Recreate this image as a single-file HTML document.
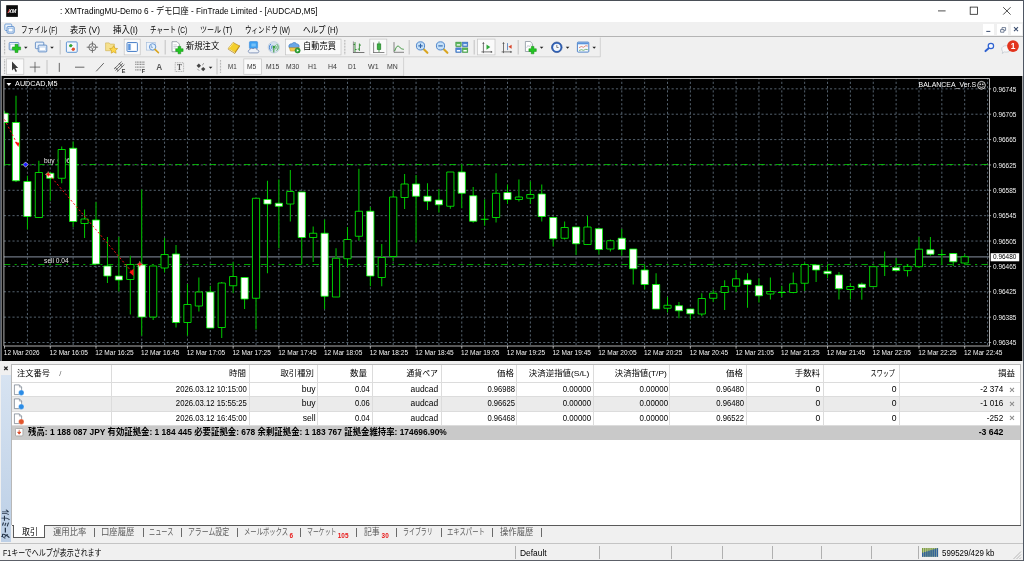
<!DOCTYPE html>
<html lang="ja"><head><meta charset="utf-8"><title>XMTradingMU-Demo 6 - AUDCAD,M5</title>
<style>
html,body{margin:0;padding:0;background:#f0f0f0;}
body{width:1024px;height:561px;overflow:hidden;font-family:"Liberation Sans","Noto Sans CJK JP",sans-serif;}
#win{will-change:transform;position:relative;width:1024px;height:561px;overflow:hidden;background:#f0f0f0;}
#win div,#win span.t,#win svg{position:absolute;}
span.t{white-space:nowrap;display:block;}
#titlebar{left:0;top:0;width:1024px;height:22px;background:#fff;}
#menubar{left:0;top:22px;width:1024px;height:14.5px;background:#f0f0f0;}
.hl{background:#a0a0a0;height:0.7px;}
.vl{background:#a0a0a0;width:0.7px;}

</style></head>
<body>
<div id="win">
<div id="titlebar">
<svg style="left:6px;top:4.500px" width="12.200" height="12.200" viewBox="0 0 12.200 12.200"><rect x="0.200" y="0.200" width="11.700" height="11.700" fill="#0c0c0c"/><text x="6.300" y="8.100" font-size="5.200" font-weight="bold" font-style="italic" text-anchor="middle" fill="#fff" font-family="Liberation Sans,sans-serif" textLength="8.200" lengthAdjust="spacingAndGlyphs">XM</text><path d="M1.800 7.900l1.900-3.600" stroke="#e02a2a" stroke-width="0.900"/></svg>
<span id="t0" class="t" style="top:4.85px;font-size:8.6px;line-height:12.90px;color:#000;left:60.40px;transform-origin:0 50%;transform:scaleX(0.9550);">: XMTradingMU-Demo 6 - デモ口座 - FinTrade Limited - [AUDCAD,M5]</span>
<svg style="left:930px;top:0" width="94" height="22" viewBox="930 0 94 22" fill="none" stroke="#222" stroke-width="0.8"><path d="M938 10.9h7.6"/><rect x="970.2" y="7.1" width="7.2" height="7.2"/><path d="M1003.2 7.2l7.4 7.4M1010.6 7.2l-7.4 7.4"/></svg>
</div>
<div style="left:0;top:0;width:1024px;height:0.8px;background:#4a4f57"></div>
<div id="menubar">
</div>
<svg style="left:4px;top:23px" width="11" height="11" viewBox="0 0 11 11"><rect x="0.8" y="1" width="7" height="6.5" rx="1" fill="#eaf2fb" stroke="#5b8fd0" stroke-width="0.8"/><rect x="3" y="3.6" width="7.2" height="6.6" rx="1" fill="#dbe9f8" stroke="#4a7fc4" stroke-width="0.8"/><rect x="4.3" y="5.4" width="4.6" height="3.4" fill="#fff" stroke="#7aa5da" stroke-width="0.5"/></svg>
<span id="t1" class="t" style="top:23.55px;font-size:8.6px;line-height:12.90px;color:#000;left:20.70px;transform-origin:0 50%;transform:scaleX(0.7644);">ファイル (F)</span>
<span id="t2" class="t" style="top:23.55px;font-size:8.6px;line-height:12.90px;color:#000;left:70.30px;transform-origin:0 50%;transform:scaleX(0.9635);">表示 (V)</span>
<span id="t3" class="t" style="top:23.55px;font-size:8.6px;line-height:12.90px;color:#000;left:113.30px;transform-origin:0 50%;transform:scaleX(0.9837);">挿入(I)</span>
<span id="t4" class="t" style="top:23.55px;font-size:8.6px;line-height:12.90px;color:#000;left:150.20px;transform-origin:0 50%;transform:scaleX(0.7632);">チャート (C)</span>
<span id="t5" class="t" style="top:23.55px;font-size:8.6px;line-height:12.90px;color:#000;left:200.20px;transform-origin:0 50%;transform:scaleX(0.8198);">ツール (T)</span>
<span id="t6" class="t" style="top:23.55px;font-size:8.6px;line-height:12.90px;color:#000;left:245.20px;transform-origin:0 50%;transform:scaleX(0.7601);">ウィンドウ (W)</span>
<span id="t7" class="t" style="top:23.55px;font-size:8.6px;line-height:12.90px;color:#000;left:303.20px;transform-origin:0 50%;transform:scaleX(0.8726);">ヘルプ (H)</span>
<div style="left:983px;top:23.800px;width:11.300px;height:11.600px;background:#fff"></div>
<div style="left:996.7px;top:23.800px;width:11.300px;height:11.600px;background:#fff"></div>
<div style="left:1010.6px;top:23.800px;width:11.300px;height:11.600px;background:#fff"></div>
<svg style="left:980px;top:22px" width="44" height="15" viewBox="980 22 44 15" fill="none" stroke="#3d4f70" stroke-width="1"><path d="M986.3 31.4h4"/><path d="M1000.6 29.6h3.4v2.6h-3.4zM1002 29.4v-1.8h3.6v2.8h-1.4" stroke-width="0.7"/><path d="M1014 27.2l4 4M1018 27.2l-4 4" stroke-width="1.1"/></svg>
<div class="hl" style="left:0;top:36.2px;width:1024px;background:#b4b4b4"></div>
<svg style="left:0;top:36.5px" width="1024" height="39.5" viewBox="0 36.5 1024 39.5" font-family="Liberation Sans,sans-serif">
<path d="M0 56.3H600.3V37" stroke="#c6c6c6" stroke-width="0.7" fill="none"/>
<path d="M0 75.6H403.6V57" stroke="#c6c6c6" stroke-width="0.7" fill="none"/>
<path d="M4.6 39.5V54" stroke="#a8a8a8" stroke-width="1.2" stroke-dasharray="0.8 0.7" fill="none"/>
<path d="M4.6 59V73.5" stroke="#a8a8a8" stroke-width="1.2" stroke-dasharray="0.8 0.7" fill="none"/>
<rect x="9.2" y="42" width="9.6" height="7.4" rx="0.8" fill="#e8f1fb" stroke="#4f7fbe" stroke-width="0.8"/><rect x="10.6" y="44" width="6.8" height="4" fill="#fff" stroke="#9bbbe2" stroke-width="0.4"/>
<path d="M15.05 43.8h2.9v2.6499999999999995h2.6499999999999995v2.9h-2.6499999999999995v2.6499999999999995h-2.9v-2.6499999999999995h-2.6499999999999995v-2.9h2.6499999999999995z" fill="#22c522" stroke="#128a12" stroke-width="0.5"/>
<path d="M24.0 46.300000000000004h3.6l-1.8 2z" fill="#222"/>
<rect x="35.4" y="41.6" width="8.4" height="6.6" rx="0.8" fill="#e8f1fb" stroke="#4f7fbe" stroke-width="0.8"/><rect x="38.2" y="44.6" width="8.6" height="6.8" rx="0.8" fill="#dce9f8" stroke="#4f7fbe" stroke-width="0.8"/><rect x="39.6" y="46.6" width="5.8" height="3.4" fill="#fff" stroke="#9bbbe2" stroke-width="0.4"/>
<path d="M50.2 46.300000000000004h3.6l-1.8 2z" fill="#222"/>
<path d="M60.2 39.5V54" stroke="#b8b8b8" stroke-width="0.8" fill="none"/>
<rect x="66.4" y="41.4" width="10.8" height="10.4" rx="1" fill="#f3f8fd" stroke="#4f8ad0" stroke-width="0.9"/><path d="M69 45.4l2-2 2 2z" fill="#2fa52f"/><path d="M71 50.4l2-2 2 2z" fill="#e0452a" transform="rotate(180 73 49.4)"/><circle cx="70.6" cy="45.2" r="1.5" fill="#36a536"/><circle cx="73.4" cy="48.6" r="1.6" fill="#e2522c"/>
<circle cx="92.4" cy="46.7" r="3.6" fill="none" stroke="#555" stroke-width="0.8"/><path d="M92.4 41v11.4M86.7 46.7h11.4" stroke="#555" stroke-width="0.8"/><circle cx="92.4" cy="46.7" r="1.2" fill="#f0f0f0" stroke="#555" stroke-width="0.5"/>
<path d="M105.6 42.4h3.6l1 1.2h4.2v6.6h-8.8z" fill="#f5e08e" stroke="#cfae4e" stroke-width="0.6"/><path d="M113.6 45.2l1.2 2.5 2.8 0.4-2 1.9 0.5 2.7-2.5-1.3-2.5 1.3 0.5-2.7-2-1.9 2.8-0.4z" fill="#ffd84a" stroke="#c79a1e" stroke-width="0.6"/>
<rect x="124.2" y="38.6" width="15.999999999999986" height="15.799999999999997" fill="#fafafa" stroke="#c4c4c4" stroke-width="0.7"/>
<rect x="127" y="42" width="10.4" height="9" rx="0.8" fill="#eaf2fb" stroke="#3f78c4" stroke-width="0.9"/><rect x="128.2" y="43.4" width="2.4" height="6.2" fill="#5b94dc"/><rect x="131.4" y="43.4" width="5" height="6.2" fill="#fff"/>
<rect x="146.6" y="42" width="8.6" height="7.6" fill="#eef4fb" stroke="#9db8da" stroke-width="0.6"/><circle cx="152.6" cy="46.4" r="3.2" fill="#dff0ff" fill-opacity="0.8" stroke="#5b8fd0" stroke-width="0.9"/><path d="M155 48.9l3.4 3.2" stroke="#d9a520" stroke-width="1.6" stroke-linecap="round"/><path d="M151.2 44.6v2.2h1.8" stroke="#3b6aa8" stroke-width="0.5" fill="none"/>
<path d="M165.2 39.5V54" stroke="#b8b8b8" stroke-width="0.8" fill="none"/>
<path d="M172 41.2h5l2.4 2.4v7.6h-7.4z" fill="#fff" stroke="#7d8792" stroke-width="0.7"/><path d="M173.4 44.4h3.4M173.4 46h4.4M173.4 47.6h2.6" stroke="#9aa7b5" stroke-width="0.5"/>
<path d="M178.05 45.9h2.7v2.35h2.35v2.7h-2.35v2.35h-2.7v-2.35h-2.35v-2.7h2.35z" fill="#22c522" stroke="#128a12" stroke-width="0.5"/>
<path d="M228.400 48.800l6.400 4.200 4.600-6.800v-1.200l-4.600 6.800-6.400-4.200z" fill="#b98414" stroke="#a87a10" stroke-width="0.500"/><path d="M228.400 48l4.600-6 6.400 3.400-4.600 6.800z" fill="#f4cf2c" stroke="#b98a14" stroke-width="0.700"/><path d="M229.400 47.400l4-5" stroke="#fbe98a" stroke-width="1" fill="none"/><path d="M228.400 48l6.400 4.200" stroke="#fff4c0" stroke-width="0.800" fill="none"/>
<rect x="249.400" y="41" width="8.200" height="7.200" rx="1" fill="#3a9ff2" stroke="#2a7fd6" stroke-width="0.500"/><path d="M251.400 43h4.400v3h-4.400z" fill="#8fd0fb" fill-opacity="0.700"/><path d="M250.200 52.400c-2.400 0-2.600-2.800-0.400-3.200 0.200-1.600 2.400-2 3.200-0.800 1.200-1.600 3.800-1 3.800 0.800 2.600 0 2.800 3.200 0.400 3.200z" fill="#eef2f8" stroke="#6f84ad" stroke-width="0.800"/>
<circle cx="273.8" cy="46.8" r="5.700" fill="#d6e2ee" stroke="#a9bdd0" stroke-width="0.500"/><path d="M271 43.400a4.400 4.400 0 0 0 0 6.800M272.400 44.800a2.600 2.600 0 0 0 0 4" stroke="#3f7fd0" stroke-width="0.900" fill="none"/><path d="M276.600 43.400a4.400 4.400 0 0 1 0 6.800M275.200 44.800a2.600 2.600 0 0 1 0 4" stroke="#3fa845" stroke-width="0.900" fill="none"/><circle cx="273.800" cy="46.600" r="1.300" fill="#2f9a3a"/><path d="M273.800 47v5" stroke="#3f9a45" stroke-width="1.100"/>
<rect x="285.6" y="38.6" width="55.39999999999998" height="15.799999999999997" fill="#fafafa" stroke="#c4c4c4" stroke-width="0.7"/>
<path d="M289 47c-0.8-2.6 1.2-4.2 3-3.6 0.6-1.6 3.6-2 4.6 0 2-0.2 3 1.6 2.4 3.6z" fill="#6aa7e6" stroke="#2f6db8" stroke-width="0.6"/><path d="M289.4 47.2h9.8l-1 3.4h-7.8z" fill="#f2c94c" stroke="#b98a1c" stroke-width="0.5"/><circle cx="297.6" cy="50" r="2.6" fill="#2fa83a" stroke="#14701e" stroke-width="0.5"/><path d="M296.8 48.7l2.2 1.3-2.2 1.3z" fill="#fff"/>
<path d="M344.8 39.5V54" stroke="#a8a8a8" stroke-width="1.2" stroke-dasharray="0.8 0.7" fill="none"/>
<path d="M355 41.6v10M355 44h-1.6M355 49h1.6M359.4 43v7.4M359.4 44.6h1.6M359.4 48.6h-1.6" stroke="#2e8b2e" stroke-width="0.9" fill="none"/><path d="M353 52h11.4" stroke="#555" stroke-width="0.8"/><path d="M353.4 41v11" stroke="#555" stroke-width="0.6"/>
<rect x="369.8" y="38.6" width="17.0" height="15.799999999999997" fill="#fafafa" stroke="#c4c4c4" stroke-width="0.7"/>
<path d="M373.6 42v10M373 52h11.4" stroke="#555" stroke-width="0.7" fill="none"/><path d="M379 41v10.4" stroke="#2e8b2e" stroke-width="0.8"/><rect x="377.2" y="43.4" width="3.6" height="5.6" fill="#3cb043" stroke="#1e7a25" stroke-width="0.6"/>
<path d="M394 41.6v10.2h10" stroke="#555" stroke-width="0.7" fill="none"/><path d="M394.6 50.6c1.6-4.4 3.2-6.4 4.6-4.4s2.8 2.4 4.6 2.6" stroke="#2e8b2e" stroke-width="0.9" fill="none"/>
<path d="M409.2 39.5V54" stroke="#b8b8b8" stroke-width="0.8" fill="none"/>
<path d="M423.5 48.6l3.900 3.700" stroke="#d9a520" stroke-width="2.100" stroke-linecap="round"/><circle cx="420.5" cy="45.400" r="4.100" fill="#c4e0f8" stroke="#4f86cc" stroke-width="1"/><path d="M418.3 45.400h4.400" stroke="#2f62a8" stroke-width="1.100"/>
<path d="M420.5 43.200v4.400" stroke="#2f62a8" stroke-width="1.100"/>
<path d="M443.5 48.6l3.900 3.700" stroke="#d9a520" stroke-width="2.100" stroke-linecap="round"/><circle cx="440.5" cy="45.400" r="4.100" fill="#c4e0f8" stroke="#4f86cc" stroke-width="1"/><path d="M438.3 45.400h4.400" stroke="#2f62a8" stroke-width="1.100"/>
<rect x="455.8" y="41.6" width="5.4" height="4.6" fill="#5cb85c" stroke="#2f8a36" stroke-width="0.5"/><rect x="462.4" y="41.6" width="5.4" height="4.6" fill="#4f8ad8" stroke="#2d62ad" stroke-width="0.5"/><rect x="455.8" y="47.4" width="5.4" height="4.6" fill="#4f8ad8" stroke="#2d62ad" stroke-width="0.5"/><rect x="462.4" y="47.4" width="5.4" height="4.6" fill="#5cb85c" stroke="#2f8a36" stroke-width="0.5"/><path d="M456.8 44.4h3.4M463.4 44.4h3.4M456.8 50.2h3.4M463.4 50.2h3.4" stroke="#fff" stroke-width="1.4"/>
<path d="M474.2 39.5V54" stroke="#b8b8b8" stroke-width="0.8" fill="none"/>
<rect x="477.4" y="38.6" width="17.600000000000023" height="15.799999999999997" fill="#fafafa" stroke="#c4c4c4" stroke-width="0.7"/>
<path d="M483.4 42.4v10.200M481.400 51.400h10.400" stroke="#555" stroke-width="0.800" fill="none"/><path d="M483.400 41.400l-1.200 1.800h2.400zM492.600 51.400l-1.800-1.200v2.400z" fill="#555"/><path d="M486.500 44l3.800 2.600-3.800 2.600z" fill="#2fa83a"/>
<path d="M503.500 42.400v10.200M501.600 51.400h9.800" stroke="#555" stroke-width="0.800" fill="none"/><path d="M503.500 41.400l-1.200 1.800h2.400zM512.200 51.400l-1.800-1.200v2.400z" fill="#555"/><path d="M507.500 42.600v7" stroke="#4a78b8" stroke-width="0.800"/><path d="M508.400 46.200l3.200-2v4z" fill="#d9452a"/>
<path d="M518.2 39.5V54" stroke="#b8b8b8" stroke-width="0.8" fill="none"/>
<path d="M525.4 41h4.8l2.2 2.2v7.8h-7z" fill="#fff" stroke="#7d8792" stroke-width="0.7"/><path d="M526.6 47.4l1.4-2.6 1.2 1.6 1.6-2.6" stroke="#9aa7b5" stroke-width="0.5" fill="none"/>
<path d="M531.25 45.9h2.7v2.35h2.35v2.7h-2.35v2.35h-2.7v-2.35h-2.35v-2.7h2.35z" fill="#22c522" stroke="#128a12" stroke-width="0.5"/>
<path d="M539.8000000000001 46.300000000000004h3.6l-1.8 2z" fill="#222"/>
<circle cx="556.8" cy="46.8" r="5.3" fill="#2f62b8" stroke="#1d3f86" stroke-width="0.6"/><circle cx="556.8" cy="46.8" r="3.6" fill="#f4f8fd"/><path d="M556.8 44.4v2.6h1.8" stroke="#333" stroke-width="0.6" fill="none"/>
<path d="M565.8000000000001 46.300000000000004h3.6l-1.8 2z" fill="#222"/>
<rect x="577.4" y="41.6" width="11.4" height="10" rx="0.8" fill="#f5f9fd" stroke="#3f78c4" stroke-width="0.9"/><rect x="577.8" y="42" width="10.6" height="1.8" fill="#5b94dc"/><path d="M579 47.2l2.4-1.2 2 0.8 2.4-1.6 2 0.4" stroke="#d9452a" stroke-width="0.6" fill="none"/><path d="M579 50l2.4-0.8 2 0.6 2.4-1 2 0.4" stroke="#2e8b2e" stroke-width="0.6" fill="none"/>
<path d="M592.4000000000001 46.300000000000004h3.6l-1.8 2z" fill="#222"/>
<path d="M988.900 47.600l-3.400 3" stroke="#2f62d0" stroke-width="2" stroke-linecap="round"/><circle cx="990.900" cy="45.500" r="2.700" fill="#f4f8ff" stroke="#2f62d0" stroke-width="1.200"/>
<path transform="translate(-0.300 2.800)" d="M1002 45.6c0-2 2-3.2 4.6-3.2s4.600 1.200 4.600 3.200-2 3.200-4.600 3.200c-0.600 0-1.200 0-1.800-0.200l-2.200 1.600 0.400-2.200c-0.600-0.600-1-1.400-1-2.400z" fill="#f7f7f7" stroke="#b4bcc6" stroke-width="0.6"/>
<circle cx="1013" cy="45.6" r="5.9" fill="#e2331c"/><text x="1013" y="48.6" font-size="8.4" font-weight="bold" fill="#fff" text-anchor="middle">1</text>
<rect x="6.4" y="58.4" width="17.4" height="15.399999999999999" fill="#fafafa" stroke="#c4c4c4" stroke-width="0.7"/>
<path d="M12 61v9l2-2 1.6 3.400 1.400-0.600-1.600-3.400h2.800z" fill="#3a3a3a"/>
<path d="M35 61.4v10.400M29.800 66.600h10.400" stroke="#444" stroke-width="0.700"/>
<path d="M47 59.5V73.5" stroke="#b8b8b8" stroke-width="0.8" fill="none"/>
<path d="M59.300 62.400v9" stroke="#444" stroke-width="0.800"/>
<path d="M75 66.700h9.400" stroke="#444" stroke-width="0.800"/>
<path d="M96.200 70.800l7.600-8.200" stroke="#444" stroke-width="0.800"/>
<path d="M114 68.600l7.600-7.400M115.400 70l7.600-7.400M116.800 71.400l7.600-7.400M115 66.600l3.400 4M119 62.600l3.400 4" stroke="#444" stroke-width="0.750" fill="none"/><text x="121.700" y="72.700" font-size="5.400" font-weight="bold" fill="#333">E</text>
<path d="M135.200 61.600h9.800M135.200 63.800h9.800M135.200 66.600h9.800M135.200 69.400h6" stroke="#555" stroke-width="0.800" stroke-dasharray="1.100 0.500"/><text x="141.700" y="72.700" font-size="5.400" font-weight="bold" fill="#333">F</text>
<text x="159.100" y="69.700" font-size="8.200" font-weight="bold" fill="#555" text-anchor="middle">A</text>
<rect x="175.200" y="62.200" width="8.400" height="8.800" fill="none" stroke="#888" stroke-width="0.600" stroke-dasharray="1 0.700"/><text x="179.400" y="69.600" font-size="7.400" font-weight="bold" fill="#555" text-anchor="middle" font-family="Liberation Serif,serif">T</text>
<path d="M196.600 65.200l2.200-2.200 2.200 2.200-2.200 2.200z" fill="#444"/><path d="M201 68.600l2.200-2.200 2.200 2.200-2.200 2.200z" fill="#444"/><path d="M197.400 68.400l1.800 1.800M204 62.800l-1.800 1.800" stroke="#444" stroke-width="0.600"/>
<path d="M208.79999999999998 66.29999999999998h3.6l-1.8 2z" fill="#222"/>
<path d="M217 58V74" stroke="#b8b8b8" stroke-width="0.8" fill="none"/>
<path d="M220.5 59.5V73" stroke="#a8a8a8" stroke-width="1.2" stroke-dasharray="0.8 0.7" fill="none"/>
<rect x="243.8" y="58.4" width="17.80000000000001" height="15.399999999999999" fill="#fafafa" stroke="#c4c4c4" stroke-width="0.7"/>
</svg>
<span id="t8" class="t" style="top:61.82px;font-size:7.3px;line-height:10.95px;color:#3a3a3a;left:227.50px;transform-origin:0 50%;transform:scaleX(0.8579);">M1</span>
<span id="t9" class="t" style="top:61.82px;font-size:7.3px;line-height:10.95px;color:#3a3a3a;left:247.30px;transform-origin:0 50%;transform:scaleX(0.9171);">M5</span>
<span id="t10" class="t" style="top:61.82px;font-size:7.3px;line-height:10.95px;color:#3a3a3a;left:266.00px;transform-origin:0 50%;transform:scaleX(0.9294);">M15</span>
<span id="t11" class="t" style="top:61.82px;font-size:7.3px;line-height:10.95px;color:#3a3a3a;left:286.00px;transform-origin:0 50%;transform:scaleX(0.9294);">M30</span>
<span id="t12" class="t" style="top:61.82px;font-size:7.3px;line-height:10.95px;color:#3a3a3a;left:308.00px;transform-origin:0 50%;transform:scaleX(0.9434);">H1</span>
<span id="t13" class="t" style="top:61.82px;font-size:7.3px;line-height:10.95px;color:#3a3a3a;left:327.70px;transform-origin:0 50%;transform:scaleX(0.9541);">H4</span>
<span id="t14" class="t" style="top:61.82px;font-size:7.3px;line-height:10.95px;color:#3a3a3a;left:348.40px;transform-origin:0 50%;transform:scaleX(0.8791);">D1</span>
<span id="t15" class="t" style="top:61.82px;font-size:7.3px;line-height:10.95px;color:#3a3a3a;left:367.60px;transform-origin:0 50%;transform:scaleX(0.9678);">W1</span>
<span id="t16" class="t" style="top:61.82px;font-size:7.3px;line-height:10.95px;color:#3a3a3a;left:387.00px;transform-origin:0 50%;transform:scaleX(0.9508);">MN</span>
<span id="t17" class="t" style="top:39.95px;font-size:8.6px;line-height:12.90px;color:#000;left:185.60px;transform-origin:0 50%;transform:scaleX(0.9654);">新規注文</span>
<span id="t18" class="t" style="top:39.95px;font-size:8.6px;line-height:12.90px;color:#000;left:303.00px;transform-origin:0 50%;transform:scaleX(0.9596);">自動売買</span>
<svg id="chart" style="left:0;top:76px" width="1024" height="285" viewBox="0 76 1024 285">
<defs><clipPath id="cp"><rect x="3.90" y="78.50" width="985.60" height="267.50"/></clipPath></defs>
<rect x="0" y="76" width="1024" height="285" fill="#000"/>
<path d="M3.9 88.85H989.5M3.9 114.21H989.5M3.9 139.58H989.5M3.9 164.94H989.5M3.9 190.31H989.5M3.9 215.67H989.5M3.9 241.04H989.5M3.9 266.40H989.5M3.9 291.77H989.5M3.9 317.13H989.5M3.9 342.50H989.5" stroke="#778899" stroke-width="0.714" stroke-dasharray="2.14 2.14" fill="none"/>
<path d="M27.43 78.5V346.0M50.29 78.5V346.0M73.15 78.5V346.0M96.01 78.5V346.0M118.87 78.5V346.0M141.73 78.5V346.0M164.59 78.5V346.0M187.45 78.5V346.0M210.31 78.5V346.0M233.17 78.5V346.0M256.03 78.5V346.0M278.89 78.5V346.0M301.75 78.5V346.0M324.61 78.5V346.0M347.47 78.5V346.0M370.33 78.5V346.0M393.19 78.5V346.0M416.05 78.5V346.0M438.91 78.5V346.0M461.77 78.5V346.0M484.63 78.5V346.0M507.49 78.5V346.0M530.35 78.5V346.0M553.21 78.5V346.0M576.07 78.5V346.0M598.93 78.5V346.0M621.79 78.5V346.0M644.65 78.5V346.0M667.51 78.5V346.0M690.37 78.5V346.0M713.23 78.5V346.0M736.09 78.5V346.0M758.95 78.5V346.0M781.81 78.5V346.0M804.67 78.5V346.0M827.53 78.5V346.0M850.39 78.5V346.0M873.25 78.5V346.0M896.11 78.5V346.0M918.97 78.5V346.0M941.83 78.5V346.0M964.69 78.5V346.0M987.55 78.5V346.0" stroke="#778899" stroke-width="0.714" stroke-dasharray="2.14 2.14" stroke-dashoffset="1" fill="none"/>
<text x="43.9" y="163" font-family="Liberation Sans,sans-serif" font-size="6.8" fill="#e8e8e8" style="word-spacing:1.3px" textLength="26.5" lengthAdjust="spacingAndGlyphs">buy 0.06</text>
<text x="44.1" y="262.6" font-family="Liberation Sans,sans-serif" font-size="6.8" fill="#e8e8e8" textLength="24.6" lengthAdjust="spacingAndGlyphs">sell 0.04</text>
<path d="M3.9 164.55H989.5M3.9 264.55H989.5" stroke="#00f000" stroke-width="0.714" stroke-dasharray="6.43 4.29 2.14 4.29" fill="none"/>
<path d="M3.9 256.89H989.5" stroke="#6c7581" stroke-width="1.3" fill="none"/>
<g clip-path="url(#cp)">
<path d="M4.57 110.75V165.75M16.00 95.75V182M27.43 175.75V229.5M38.86 160.75V217.5M50.29 172V200.75M61.72 146.5V183.25M73.15 141.5V227M84.58 209.5V238M96.01 202V264M107.44 237V283M118.87 237V291.5M130.30 255.75V314.5M141.73 189.5V335.75M153.16 266V320M164.59 238V272.5M176.02 245V327.5M187.45 284V335.75M198.88 277.5V311.5M210.31 285.75V328M221.74 282V338M233.17 262V293M244.60 277.5V309M256.03 198.25V329.5M267.46 180.75V273.25M278.89 179.5V248.25M290.32 170V221.5M301.75 192V264.5M313.18 226.5V262M324.61 219.5V309M336.04 248.25V297M347.47 227V267M358.90 168.75V240.75M370.33 207V286.25M381.76 244V286.25M393.19 190.75V261.25M404.62 174V209M416.05 175V242.5M427.48 183.25V210M438.91 189V212.5M450.34 172V208.75M461.77 164V208.25M473.20 187V222.75M484.63 199.25V225.75M496.06 173.25V222.5M507.49 184.5V204M518.92 179.5V201.5M530.35 181.25V204M541.78 184.5V221.5M553.21 217.5V246.5M564.64 221.5V239.5M576.07 227V255M587.50 215.75V244.5M598.93 228.75V254.5M610.36 239.5V251.5M621.79 228.75V255.75M633.22 249V284.5M644.65 264.5V289.5M656.08 273.25V309M667.51 297V312.5M678.94 302V318.25M690.37 309V319.5M701.80 293.25V316.25M713.23 289.5V302M724.66 280.25V310M736.09 270V292M747.52 273.25V307.75M758.95 278.25V302.5M770.38 277.5V299.5M781.81 285.75V297M793.24 272.5V293.25M804.67 262.5V291M816.10 265V282M827.53 264.5V278.25M838.96 272V299.5M850.39 283.5V299.5M861.82 282.6V299.7M873.25 266.7V286.6M884.68 251.5V276M896.11 258V271.7M907.54 264V276.5M918.97 237V267.75M930.40 237V255.7M941.83 249.8V264.7M953.26 253.5V266.2M964.69 254.2V264.5" stroke="#000" stroke-width="1.5" fill="none"/>
<path d="M4.57 110.75V165.75M16.00 95.75V182M27.43 175.75V229.5M38.86 160.75V217.5M50.29 172V200.75M61.72 146.5V183.25M73.15 141.5V227M84.58 209.5V238M96.01 202V264M107.44 237V283M118.87 237V291.5M130.30 255.75V314.5M141.73 189.5V335.75M153.16 266V320M164.59 238V272.5M176.02 245V327.5M187.45 284V335.75M198.88 277.5V311.5M210.31 285.75V328M221.74 282V338M233.17 262V293M244.60 277.5V309M256.03 198.25V329.5M267.46 180.75V273.25M278.89 179.5V248.25M290.32 170V221.5M301.75 192V264.5M313.18 226.5V262M324.61 219.5V309M336.04 248.25V297M347.47 227V267M358.90 168.75V240.75M370.33 207V286.25M381.76 244V286.25M393.19 190.75V261.25M404.62 174V209M416.05 175V242.5M427.48 183.25V210M438.91 189V212.5M450.34 172V208.75M461.77 164V208.25M473.20 187V222.75M484.63 199.25V225.75M496.06 173.25V222.5M507.49 184.5V204M518.92 179.5V201.5M530.35 181.25V204M541.78 184.5V221.5M553.21 217.5V246.5M564.64 221.5V239.5M576.07 227V255M587.50 215.75V244.5M598.93 228.75V254.5M610.36 239.5V251.5M621.79 228.75V255.75M633.22 249V284.5M644.65 264.5V289.5M656.08 273.25V309M667.51 297V312.5M678.94 302V318.25M690.37 309V319.5M701.80 293.25V316.25M713.23 289.5V302M724.66 280.25V310M736.09 270V292M747.52 273.25V307.75M758.95 278.25V302.5M770.38 277.5V299.5M781.81 285.75V297M793.24 272.5V293.25M804.67 262.5V291M816.10 265V282M827.53 264.5V278.25M838.96 272V299.5M850.39 283.5V299.5M861.82 282.6V299.7M873.25 266.7V286.6M884.68 251.5V276M896.11 258V271.7M907.54 264V276.5M918.97 237V267.75M930.40 237V255.7M941.83 249.8V264.7M953.26 253.5V266.2M964.69 254.2V264.5" stroke="#00ff00" stroke-width="0.8" fill="none"/>
<path d="M35.26 172.5H42.46V217.5H35.26zM58.12 149.5H65.32V178.25H58.12zM80.98 219H88.18V223.5H80.98zM126.70 264.5H133.90V279.5H126.70zM149.56 266H156.76V317H149.56zM160.99 254.5H168.19V268H160.99zM183.85 304.5H191.05V322.5H183.85zM195.28 292H202.48V306H195.28zM218.14 283H225.34V327.5H218.14zM229.57 276.5H236.77V285.75H229.57zM252.43 198.25H259.63V298.25H252.43zM286.72 191.5H293.92V204H286.72zM309.58 233.25H316.78V237.5H309.58zM332.44 258.25H339.64V297H332.44zM343.87 239.5H351.07V258.75H343.87zM355.30 211.25H362.50V236.25H355.30zM378.16 257.5H385.36V277.5H378.16zM389.59 197H396.79V256.5H389.59zM401.02 184H408.22V197.5H401.02zM446.74 172H453.94V206.25H446.74zM492.46 193.25H499.66V217.5H492.46zM515.32 197H522.52V199.5H515.32zM526.75 194.5H533.95V198.25H526.75zM561.04 227.5H568.24V238.25H561.04zM583.90 227H591.10V244.5H583.90zM606.76 240.75H613.96V249H606.76zM663.91 305.25H671.11V308.25H663.91zM698.20 298.5H705.40V314H698.20zM709.63 293.25H716.83V298.25H709.63zM721.06 286.5H728.26V292.5H721.06zM732.49 278.75H739.69V286.25H732.49zM766.78 291.5H773.98V294H766.78zM789.64 283.75H796.84V292.5H789.64zM801.07 264.5H808.27V283.25H801.07zM846.79 286.5H853.99V289.5H846.79zM869.65 266.7H876.85V286.6H869.65zM903.94 266.4H911.14V270.6H903.94zM915.37 249.2H922.57V266.7H915.37zM961.09 256.8H968.29V263H961.09z" stroke="#00ff00" stroke-width="0.8" fill="#000"/>
<path d="M0.97 113.25H8.17V122.5H0.97zM12.40 122.5H19.60V180.75H12.40zM23.83 181.5H31.03V216.5H23.83zM46.69 173.25H53.89V178.25H46.69zM69.55 148.25H76.75V221.5H69.55zM92.41 220H99.61V264H92.41zM103.84 266H111.04V276H103.84zM115.27 276H122.47V280H115.27zM138.13 265H145.33V317H138.13zM172.42 254H179.62V322.5H172.42zM206.71 292H213.91V328H206.71zM241.00 277.5H248.20V299H241.00zM263.86 199.5H271.06V204H263.86zM275.29 203.25H282.49V206.25H275.29zM298.15 192H305.35V237.5H298.15zM321.01 233.25H328.21V296.25H321.01zM366.73 211.25H373.93V276H366.73zM412.45 184H419.65V196.25H412.45zM423.88 196.25H431.08V201.25H423.88zM435.31 200H442.51V204.75H435.31zM458.17 172H465.37V193.25H458.17zM469.60 195.75H476.80V221.25H469.60zM503.89 192.5H511.09V199.5H503.89zM538.18 194H545.38V216.5H538.18zM549.61 217.5H556.81V238.75H549.61zM572.47 227H579.67V243.75H572.47zM595.33 228.75H602.53V249.5H595.33zM618.19 238.25H625.39V249.5H618.19zM629.62 249H636.82V268.75H629.62zM641.05 270H648.25V284.5H641.05zM652.48 284.5H659.68V309H652.48zM675.34 305.75H682.54V310.75H675.34zM686.77 309H693.97V313.75H686.77zM743.92 280H751.12V284.5H743.92zM755.35 285.75H762.55V295.75H755.35zM812.50 265H819.70V270H812.50zM823.93 271.25H831.13V273.75H823.93zM835.36 275H842.56V288.75H835.36zM858.22 284.2H865.42V287.4H858.22zM892.51 267.75H899.71V270.6H892.51zM926.80 249.8H934.00V254.2H926.80zM949.66 253.5H956.86V261.8H949.66z" stroke="#00ff00" stroke-width="0.8" fill="#fff"/>
<path d="M480.73 219.25H488.53M777.91 292.5H785.71M880.78 266.2H888.58M937.93 254.6H945.73" stroke="#00ff00" stroke-width="0.95" fill="none"/>
<path d="M4.4 119.3L17.5 144.5M49 174.4L131.8 271.8" stroke="#ff1010" stroke-width="0.95" stroke-dasharray="2.1 2.1" fill="none"/>
<path d="M14.800 142l4.600 0.800-1 4.200z" fill="#ff1010"/>
<path d="M48.2 171.4l0.900 2.100 2.100 0.900-2.100 0.900-0.900 2.100-0.900-2.100-2.100-0.900 2.100-0.900z" fill="#ff1010" stroke="#fff" stroke-width="0.25"/>
<path d="M133.600 268.700v7.200l-4.300-3.600z" fill="#ff1010"/>
<path d="M139.800 261.200l0.900 2.200 2.200 0.900-2.200 0.900-0.900 2.200-0.900-2.200-2.200-0.900 2.200-0.900z" fill="#ff1010" stroke="#fff" stroke-width="0.25"/>
<path d="M25.600 161.900l2.600 2.700-2.600 2.700-2.600-2.700z" fill="#1a1aff" stroke="#fff" stroke-width="0.6"/>
</g>
<path d="M3.9 346.0V78.5H989.5V346.2" stroke="#dcdcdc" stroke-width="0.8" fill="none"/>
<path d="M3.9 346.0H989.5" stroke="#dcdcdc" stroke-width="0.8" fill="none"/>
<text x="993" y="91.55" font-family="Liberation Sans,sans-serif" font-size="6.8" fill="#f2f2f2" textLength="23.4" lengthAdjust="spacingAndGlyphs">0.96745</text>
<text x="993" y="116.91" font-family="Liberation Sans,sans-serif" font-size="6.8" fill="#f2f2f2" textLength="23.4" lengthAdjust="spacingAndGlyphs">0.96705</text>
<text x="993" y="142.28" font-family="Liberation Sans,sans-serif" font-size="6.8" fill="#f2f2f2" textLength="23.4" lengthAdjust="spacingAndGlyphs">0.96665</text>
<text x="993" y="167.64" font-family="Liberation Sans,sans-serif" font-size="6.8" fill="#f2f2f2" textLength="23.4" lengthAdjust="spacingAndGlyphs">0.96625</text>
<text x="993" y="193.01" font-family="Liberation Sans,sans-serif" font-size="6.8" fill="#f2f2f2" textLength="23.4" lengthAdjust="spacingAndGlyphs">0.96585</text>
<text x="993" y="218.37" font-family="Liberation Sans,sans-serif" font-size="6.8" fill="#f2f2f2" textLength="23.4" lengthAdjust="spacingAndGlyphs">0.96545</text>
<text x="993" y="243.74" font-family="Liberation Sans,sans-serif" font-size="6.8" fill="#f2f2f2" textLength="23.4" lengthAdjust="spacingAndGlyphs">0.96505</text>
<text x="993" y="269.10" font-family="Liberation Sans,sans-serif" font-size="6.8" fill="#f2f2f2" textLength="23.4" lengthAdjust="spacingAndGlyphs">0.96465</text>
<text x="993" y="294.47" font-family="Liberation Sans,sans-serif" font-size="6.8" fill="#f2f2f2" textLength="23.4" lengthAdjust="spacingAndGlyphs">0.96425</text>
<text x="993" y="319.83" font-family="Liberation Sans,sans-serif" font-size="6.8" fill="#f2f2f2" textLength="23.4" lengthAdjust="spacingAndGlyphs">0.96385</text>
<text x="993" y="345.20" font-family="Liberation Sans,sans-serif" font-size="6.8" fill="#f2f2f2" textLength="23.4" lengthAdjust="spacingAndGlyphs">0.96345</text>
<text x="3.87" y="355.3" font-family="Liberation Sans,sans-serif" font-size="6.8" fill="#f2f2f2" textLength="35.6" lengthAdjust="spacingAndGlyphs">12 Mar 2026</text>
<text x="49.59" y="355.3" font-family="Liberation Sans,sans-serif" font-size="6.8" fill="#f2f2f2" textLength="38.4" lengthAdjust="spacingAndGlyphs">12 Mar 16:05</text>
<text x="95.31" y="355.3" font-family="Liberation Sans,sans-serif" font-size="6.8" fill="#f2f2f2" textLength="38.4" lengthAdjust="spacingAndGlyphs">12 Mar 16:25</text>
<text x="141.03" y="355.3" font-family="Liberation Sans,sans-serif" font-size="6.8" fill="#f2f2f2" textLength="38.4" lengthAdjust="spacingAndGlyphs">12 Mar 16:45</text>
<text x="186.75" y="355.3" font-family="Liberation Sans,sans-serif" font-size="6.8" fill="#f2f2f2" textLength="38.4" lengthAdjust="spacingAndGlyphs">12 Mar 17:05</text>
<text x="232.47" y="355.3" font-family="Liberation Sans,sans-serif" font-size="6.8" fill="#f2f2f2" textLength="38.4" lengthAdjust="spacingAndGlyphs">12 Mar 17:25</text>
<text x="278.19" y="355.3" font-family="Liberation Sans,sans-serif" font-size="6.8" fill="#f2f2f2" textLength="38.4" lengthAdjust="spacingAndGlyphs">12 Mar 17:45</text>
<text x="323.91" y="355.3" font-family="Liberation Sans,sans-serif" font-size="6.8" fill="#f2f2f2" textLength="38.4" lengthAdjust="spacingAndGlyphs">12 Mar 18:05</text>
<text x="369.63" y="355.3" font-family="Liberation Sans,sans-serif" font-size="6.8" fill="#f2f2f2" textLength="38.4" lengthAdjust="spacingAndGlyphs">12 Mar 18:25</text>
<text x="415.35" y="355.3" font-family="Liberation Sans,sans-serif" font-size="6.8" fill="#f2f2f2" textLength="38.4" lengthAdjust="spacingAndGlyphs">12 Mar 18:45</text>
<text x="461.07" y="355.3" font-family="Liberation Sans,sans-serif" font-size="6.8" fill="#f2f2f2" textLength="38.4" lengthAdjust="spacingAndGlyphs">12 Mar 19:05</text>
<text x="506.79" y="355.3" font-family="Liberation Sans,sans-serif" font-size="6.8" fill="#f2f2f2" textLength="38.4" lengthAdjust="spacingAndGlyphs">12 Mar 19:25</text>
<text x="552.51" y="355.3" font-family="Liberation Sans,sans-serif" font-size="6.8" fill="#f2f2f2" textLength="38.4" lengthAdjust="spacingAndGlyphs">12 Mar 19:45</text>
<text x="598.23" y="355.3" font-family="Liberation Sans,sans-serif" font-size="6.8" fill="#f2f2f2" textLength="38.4" lengthAdjust="spacingAndGlyphs">12 Mar 20:05</text>
<text x="643.95" y="355.3" font-family="Liberation Sans,sans-serif" font-size="6.8" fill="#f2f2f2" textLength="38.4" lengthAdjust="spacingAndGlyphs">12 Mar 20:25</text>
<text x="689.67" y="355.3" font-family="Liberation Sans,sans-serif" font-size="6.8" fill="#f2f2f2" textLength="38.4" lengthAdjust="spacingAndGlyphs">12 Mar 20:45</text>
<text x="735.39" y="355.3" font-family="Liberation Sans,sans-serif" font-size="6.8" fill="#f2f2f2" textLength="38.4" lengthAdjust="spacingAndGlyphs">12 Mar 21:05</text>
<text x="781.11" y="355.3" font-family="Liberation Sans,sans-serif" font-size="6.8" fill="#f2f2f2" textLength="38.4" lengthAdjust="spacingAndGlyphs">12 Mar 21:25</text>
<text x="826.83" y="355.3" font-family="Liberation Sans,sans-serif" font-size="6.8" fill="#f2f2f2" textLength="38.4" lengthAdjust="spacingAndGlyphs">12 Mar 21:45</text>
<text x="872.55" y="355.3" font-family="Liberation Sans,sans-serif" font-size="6.8" fill="#f2f2f2" textLength="38.4" lengthAdjust="spacingAndGlyphs">12 Mar 22:05</text>
<text x="918.27" y="355.3" font-family="Liberation Sans,sans-serif" font-size="6.8" fill="#f2f2f2" textLength="38.4" lengthAdjust="spacingAndGlyphs">12 Mar 22:25</text>
<text x="963.99" y="355.3" font-family="Liberation Sans,sans-serif" font-size="6.8" fill="#f2f2f2" textLength="38.4" lengthAdjust="spacingAndGlyphs">12 Mar 22:45</text>
<path d="M989.5 88.85h1.6M989.5 114.21h1.6M989.5 139.58h1.6M989.5 164.94h1.6M989.5 190.31h1.6M989.5 215.67h1.6M989.5 241.04h1.6M989.5 266.40h1.6M989.5 291.77h1.6M989.5 317.13h1.6M989.5 342.50h1.6M4.57 346.0v2.6M50.29 346.0v2.6M96.01 346.0v2.6M141.73 346.0v2.6M187.45 346.0v2.6M233.17 346.0v2.6M278.89 346.0v2.6M324.61 346.0v2.6M370.33 346.0v2.6M416.05 346.0v2.6M461.77 346.0v2.6M507.49 346.0v2.6M553.21 346.0v2.6M598.93 346.0v2.6M644.65 346.0v2.6M690.37 346.0v2.6M736.09 346.0v2.6M781.81 346.0v2.6M827.53 346.0v2.6M873.25 346.0v2.6M918.97 346.0v2.6M964.69 346.0v2.6" stroke="#e6e6e6" stroke-width="0.714" fill="none"/>
<rect x="990.7" y="253.19" width="28.5" height="8.1" fill="#fff"/>
<text x="993" y="259.19" font-family="Liberation Sans,sans-serif" font-size="6.8" fill="#000" textLength="23.4" lengthAdjust="spacingAndGlyphs">0.96480</text>
<path d="M6.500 83h4.800l-2.400 2.900z" fill="#fff"/>
<text x="15.100" y="86.400" font-family="Liberation Sans,sans-serif" font-size="6.8" fill="#fff" textLength="42.500" lengthAdjust="spacingAndGlyphs">AUDCAD,M5</text>
<text x="918.600" y="86.600" font-family="Liberation Sans,sans-serif" font-size="6.8" fill="#fff" textLength="57.500" lengthAdjust="spacingAndGlyphs">BALANCEA_Ver.S</text>
<circle cx="981.500" cy="85.300" r="3.900" fill="#111" stroke="#f4f4f4" stroke-width="0.800"/><circle cx="980.200" cy="84.300" r="0.750" fill="#fff"/><circle cx="982.800" cy="84.300" r="0.750" fill="#fff"/><path d="M979.300 86.600q2.200 2 4.400 0" stroke="#fff" stroke-width="0.700" fill="none"/>
</svg>
<div style="left:0;top:0;width:1px;height:561px;background:#4f5763"></div>
<div style="left:1px;top:76px;width:1.100px;height:285px;background:#6e6e6e"></div>
<div style="left:1021.6px;top:76px;width:2.4px;height:285px;background:#a6a6a6"></div>
<div style="left:0;top:361px;width:1024px;height:200px;background:#f0f0f0"></div>
<div style="left:11.6px;top:364.3px;width:1008.6px;height:160.7px;background:#fff"></div>
<div style="left:1.4px;top:375px;width:10px;height:166.5px;background:linear-gradient(#d7e3f1,#bccfe6)"></div>
<svg style="left:2px;top:364px" width="9" height="9" viewBox="0 0 9 9"><path d="M2.2 2.600l3.400 3.400M5.600 2.600l-3.400 3.400" stroke="#222" stroke-width="1.300" fill="none"/></svg>
<div style="left:11.6px;top:396.55px;width:1008.6px;height:14.35px;background:#ebebeb"></div>
<div style="left:11.6px;top:425.25px;width:1008.6px;height:14.35px;background:#c9c9c9"></div>
<div class="vl" style="left:111.2px;top:364.3px;height:60.94999999999999px;background:#dcdcdc"></div>
<div class="vl" style="left:249.2px;top:364.3px;height:60.94999999999999px;background:#dcdcdc"></div>
<div class="vl" style="left:317.3px;top:364.3px;height:60.94999999999999px;background:#dcdcdc"></div>
<div class="vl" style="left:372px;top:364.3px;height:60.94999999999999px;background:#dcdcdc"></div>
<div class="vl" style="left:440.5px;top:364.3px;height:60.94999999999999px;background:#dcdcdc"></div>
<div class="vl" style="left:516.4px;top:364.3px;height:60.94999999999999px;background:#dcdcdc"></div>
<div class="vl" style="left:593.2px;top:364.3px;height:60.94999999999999px;background:#dcdcdc"></div>
<div class="vl" style="left:669.4px;top:364.3px;height:60.94999999999999px;background:#dcdcdc"></div>
<div class="vl" style="left:746.1px;top:364.3px;height:60.94999999999999px;background:#dcdcdc"></div>
<div class="vl" style="left:823px;top:364.3px;height:60.94999999999999px;background:#dcdcdc"></div>
<div class="vl" style="left:899.2px;top:364.3px;height:60.94999999999999px;background:#dcdcdc"></div>
<div class="hl" style="left:11.6px;top:381.9px;width:1008.6px;background:#dcdcdc"></div>
<div class="hl" style="left:11.6px;top:396.25px;width:1008.6px;background:#dcdcdc"></div>
<div class="hl" style="left:11.6px;top:410.59999999999997px;width:1008.6px;background:#dcdcdc"></div>
<div class="hl" style="left:11.6px;top:424.95px;width:1008.6px;background:#dcdcdc"></div>
<div class="hl" style="left:11.6px;top:363.90000000000003px;width:1008.6px;background:#b8b8b8"></div>
<div class="vl" style="left:11.2px;top:364.3px;height:160.7px;background:#b8b8b8"></div>
<div class="vl" style="left:1020.2px;top:364.3px;height:160.7px;background:#b8b8b8"></div>
<span id="t19" class="t" style="top:368.30px;font-size:8px;line-height:12.00px;color:#000;left:17.00px;transform-origin:0 50%;transform:scaleX(1.0312);">注文番号</span>
<span id="t20" class="t" style="top:368.00px;font-size:7.6px;line-height:11.40px;color:#5a5a5a;left:59.20px;transform-origin:0 50%;">/</span>
<span id="t21" class="t" style="top:368.30px;font-size:8px;line-height:12.00px;color:#000;right:778.40px;transform-origin:100% 50%;transform:scaleX(1.0625);">時間</span>
<span id="t22" class="t" style="top:368.30px;font-size:8px;line-height:12.00px;color:#000;right:710.00px;transform-origin:100% 50%;transform:scaleX(1.0469);">取引種別</span>
<span id="t23" class="t" style="top:368.30px;font-size:8px;line-height:12.00px;color:#000;right:656.80px;transform-origin:100% 50%;transform:scaleX(1.0625);">数量</span>
<span id="t24" class="t" style="top:368.30px;font-size:8px;line-height:12.00px;color:#000;right:585.80px;transform-origin:100% 50%;transform:scaleX(0.9844);">通貨ペア</span>
<span id="t25" class="t" style="top:368.30px;font-size:8px;line-height:12.00px;color:#000;right:509.80px;transform-origin:100% 50%;transform:scaleX(1.0625);">価格</span>
<span id="t26" class="t" style="top:368.30px;font-size:8px;line-height:12.00px;color:#000;right:434.20px;transform-origin:100% 50%;transform:scaleX(1.0550);">決済逆指値(S/L)</span>
<span id="t27" class="t" style="top:368.30px;font-size:8px;line-height:12.00px;color:#000;right:357.40px;transform-origin:100% 50%;transform:scaleX(1.0446);">決済指値(T/P)</span>
<span id="t28" class="t" style="top:368.30px;font-size:8px;line-height:12.00px;color:#000;right:280.80px;transform-origin:100% 50%;transform:scaleX(1.0625);">価格</span>
<span id="t29" class="t" style="top:368.30px;font-size:8px;line-height:12.00px;color:#000;right:204.40px;transform-origin:100% 50%;transform:scaleX(1.0500);">手数料</span>
<span id="t30" class="t" style="top:368.30px;font-size:8px;line-height:12.00px;color:#000;right:128.80px;transform-origin:100% 50%;transform:scaleX(0.7656);">スワップ</span>
<span id="t31" class="t" style="top:368.30px;font-size:8px;line-height:12.00px;color:#000;right:8.60px;transform-origin:100% 50%;transform:scaleX(1.0625);">損益</span>
<span id="t32" class="t" style="top:383.12px;font-size:8.6px;line-height:12.90px;color:#000;right:776.80px;transform-origin:100% 50%;transform:scaleX(0.9003);">2026.03.12 10:15:00</span>
<span id="t33" class="t" style="top:383.12px;font-size:8.6px;line-height:12.90px;color:#000;right:708.40px;transform-origin:100% 50%;">buy</span>
<span id="t34" class="t" style="top:383.12px;font-size:8.6px;line-height:12.90px;color:#000;right:654.60px;transform-origin:100% 50%;transform:scaleX(0.8844);">0.04</span>
<span id="t35" class="t" style="top:383.12px;font-size:8.6px;line-height:12.90px;color:#000;right:585.60px;transform-origin:100% 50%;transform:scaleX(0.9822);">audcad</span>
<span id="t36" class="t" style="top:383.12px;font-size:8.6px;line-height:12.90px;color:#000;right:509.20px;transform-origin:100% 50%;transform:scaleX(0.8881);">0.96988</span>
<span id="t37" class="t" style="top:383.12px;font-size:8.6px;line-height:12.90px;color:#000;right:433.00px;transform-origin:100% 50%;transform:scaleX(0.9138);">0.00000</span>
<span id="t38" class="t" style="top:383.12px;font-size:8.6px;line-height:12.90px;color:#000;right:356.20px;transform-origin:100% 50%;transform:scaleX(0.9203);">0.00000</span>
<span id="t39" class="t" style="top:383.12px;font-size:8.6px;line-height:12.90px;color:#000;right:279.80px;transform-origin:100% 50%;transform:scaleX(0.8945);">0.96480</span>
<span id="t40" class="t" style="top:383.12px;font-size:8.6px;line-height:12.90px;color:#000;right:203.80px;transform-origin:100% 50%;">0</span>
<span id="t41" class="t" style="top:383.12px;font-size:8.6px;line-height:12.90px;color:#000;right:127.40px;transform-origin:100% 50%;">0</span>
<span id="t42" class="t" style="top:383.12px;font-size:8.6px;line-height:12.90px;color:#000;right:20.60px;transform-origin:100% 50%;transform:scaleX(0.9436);">-2 374</span>
<span id="t43" class="t" style="top:382.52px;font-size:9.4px;line-height:14.10px;color:#8c8c8c;font-weight:bold;left:1009.30px;transform-origin:0 50%;">×</span>
<svg style="left:13.400px;top:383.80px" width="12" height="12" viewBox="0 0 12 12"><path d="M1.400 0.900h5l2.200 2.200v7.500h-7.200z" fill="#fff" stroke="#6b7785" stroke-width="0.700"/><path d="M6.400 0.900v2.200h2.200" fill="none" stroke="#6b7785" stroke-width="0.500"/><circle cx="8.300" cy="8.700" r="2.700" fill="#2b8ce6" stroke="#fff" stroke-width="0.300"/></svg>
<span id="t44" class="t" style="top:397.48px;font-size:8.6px;line-height:12.90px;color:#000;right:776.80px;transform-origin:100% 50%;transform:scaleX(0.9003);">2026.03.12 15:55:25</span>
<span id="t45" class="t" style="top:397.48px;font-size:8.6px;line-height:12.90px;color:#000;right:708.40px;transform-origin:100% 50%;">buy</span>
<span id="t46" class="t" style="top:397.48px;font-size:8.6px;line-height:12.90px;color:#000;right:654.60px;transform-origin:100% 50%;transform:scaleX(0.8844);">0.06</span>
<span id="t47" class="t" style="top:397.48px;font-size:8.6px;line-height:12.90px;color:#000;right:585.60px;transform-origin:100% 50%;transform:scaleX(0.9822);">audcad</span>
<span id="t48" class="t" style="top:397.48px;font-size:8.6px;line-height:12.90px;color:#000;right:509.20px;transform-origin:100% 50%;transform:scaleX(0.8881);">0.96625</span>
<span id="t49" class="t" style="top:397.48px;font-size:8.6px;line-height:12.90px;color:#000;right:433.00px;transform-origin:100% 50%;transform:scaleX(0.9138);">0.00000</span>
<span id="t50" class="t" style="top:397.48px;font-size:8.6px;line-height:12.90px;color:#000;right:356.20px;transform-origin:100% 50%;transform:scaleX(0.9203);">0.00000</span>
<span id="t51" class="t" style="top:397.48px;font-size:8.6px;line-height:12.90px;color:#000;right:279.80px;transform-origin:100% 50%;transform:scaleX(0.8945);">0.96480</span>
<span id="t52" class="t" style="top:397.48px;font-size:8.6px;line-height:12.90px;color:#000;right:203.80px;transform-origin:100% 50%;">0</span>
<span id="t53" class="t" style="top:397.48px;font-size:8.6px;line-height:12.90px;color:#000;right:127.40px;transform-origin:100% 50%;">0</span>
<span id="t54" class="t" style="top:397.48px;font-size:8.6px;line-height:12.90px;color:#000;right:20.60px;transform-origin:100% 50%;transform:scaleX(0.9436);">-1 016</span>
<span id="t55" class="t" style="top:396.88px;font-size:9.4px;line-height:14.10px;color:#8c8c8c;font-weight:bold;left:1009.30px;transform-origin:0 50%;">×</span>
<svg style="left:13.400px;top:398.15px" width="12" height="12" viewBox="0 0 12 12"><path d="M1.400 0.900h5l2.200 2.200v7.500h-7.200z" fill="#fff" stroke="#6b7785" stroke-width="0.700"/><path d="M6.400 0.900v2.200h2.200" fill="none" stroke="#6b7785" stroke-width="0.500"/><circle cx="8.300" cy="8.700" r="2.700" fill="#2b8ce6" stroke="#fff" stroke-width="0.300"/></svg>
<span id="t56" class="t" style="top:411.82px;font-size:8.6px;line-height:12.90px;color:#000;right:776.80px;transform-origin:100% 50%;transform:scaleX(0.9003);">2026.03.12 16:45:00</span>
<span id="t57" class="t" style="top:411.82px;font-size:8.6px;line-height:12.90px;color:#000;right:708.40px;transform-origin:100% 50%;">sell</span>
<span id="t58" class="t" style="top:411.82px;font-size:8.6px;line-height:12.90px;color:#000;right:654.60px;transform-origin:100% 50%;transform:scaleX(0.8844);">0.04</span>
<span id="t59" class="t" style="top:411.82px;font-size:8.6px;line-height:12.90px;color:#000;right:585.60px;transform-origin:100% 50%;transform:scaleX(0.9822);">audcad</span>
<span id="t60" class="t" style="top:411.82px;font-size:8.6px;line-height:12.90px;color:#000;right:509.20px;transform-origin:100% 50%;transform:scaleX(0.8881);">0.96468</span>
<span id="t61" class="t" style="top:411.82px;font-size:8.6px;line-height:12.90px;color:#000;right:433.00px;transform-origin:100% 50%;transform:scaleX(0.9138);">0.00000</span>
<span id="t62" class="t" style="top:411.82px;font-size:8.6px;line-height:12.90px;color:#000;right:356.20px;transform-origin:100% 50%;transform:scaleX(0.9203);">0.00000</span>
<span id="t63" class="t" style="top:411.82px;font-size:8.6px;line-height:12.90px;color:#000;right:279.80px;transform-origin:100% 50%;transform:scaleX(0.8945);">0.96522</span>
<span id="t64" class="t" style="top:411.82px;font-size:8.6px;line-height:12.90px;color:#000;right:203.80px;transform-origin:100% 50%;">0</span>
<span id="t65" class="t" style="top:411.82px;font-size:8.6px;line-height:12.90px;color:#000;right:127.40px;transform-origin:100% 50%;">0</span>
<span id="t66" class="t" style="top:411.82px;font-size:8.6px;line-height:12.90px;color:#000;right:20.60px;transform-origin:100% 50%;transform:scaleX(0.9533);">-252</span>
<span id="t67" class="t" style="top:411.22px;font-size:9.4px;line-height:14.10px;color:#8c8c8c;font-weight:bold;left:1009.30px;transform-origin:0 50%;">×</span>
<svg style="left:13.400px;top:412.50px" width="12" height="12" viewBox="0 0 12 12"><path d="M1.400 0.900h5l2.200 2.200v7.500h-7.200z" fill="#fff" stroke="#6b7785" stroke-width="0.700"/><path d="M6.400 0.900v2.200h2.200" fill="none" stroke="#6b7785" stroke-width="0.500"/><circle cx="8.300" cy="8.700" r="2.700" fill="#e2552c" stroke="#fff" stroke-width="0.300"/></svg>
<svg style="left:14.600px;top:428.25px" width="9" height="9" viewBox="0 0 9 9"><rect x="0.500" y="0.500" width="7.400" height="7.400" rx="0.800" fill="#fff" stroke="#8a8a8a" stroke-width="0.600"/><path d="M4.200 1.800v3.400M2.600 4.200l1.600 2 1.600-2z" fill="#d8401e" stroke="#d8401e" stroke-width="0.700"/></svg>
<span id="t68" class="t" style="top:426.18px;font-size:8.6px;line-height:12.90px;color:#000;font-weight:bold;left:28.40px;transform-origin:0 50%;transform:scaleX(0.9757);">残高: 1 188 087 JPY  有効証拠金: 1 184 445  必要証拠金: 678  余剰証拠金: 1 183 767  証拠金維持率: 174696.90%</span>
<span id="t69" class="t" style="top:426.18px;font-size:8.6px;line-height:12.90px;color:#000;font-weight:bold;right:20.60px;transform-origin:100% 50%;transform:scaleX(1.0133);">-3 642</span>
<div class="hl" style="left:11.6px;top:524.700px;width:1009.2px;height:0.9px;background:#5a5a5a"></div>
<div style="left:12.700px;top:524.500px;width:32.400px;height:13.700px;background:#fff;border:0.8px solid #5a5a5a;border-top:none;box-sizing:border-box"></div>
<span id="t70" class="t" style="top:525.95px;font-size:8.6px;line-height:12.90px;color:#000;left:21.80px;transform-origin:0 50%;transform:scaleX(0.9184);">取引</span>
<span id="t71" class="t" style="top:525.95px;font-size:8.6px;line-height:12.90px;color:#5a5a5a;left:52.80px;transform-origin:0 50%;transform:scaleX(0.9712);">運用比率</span>
<span id="t72" class="t" style="top:525.95px;font-size:8.6px;line-height:12.90px;color:#5a5a5a;left:101.20px;transform-origin:0 50%;transform:scaleX(0.9712);">口座履歴</span>
<span id="t73" class="t" style="top:525.95px;font-size:8.6px;line-height:12.90px;color:#5a5a5a;left:149.30px;transform-origin:0 50%;transform:scaleX(0.7186);">ニュース</span>
<span id="t74" class="t" style="top:525.95px;font-size:8.6px;line-height:12.90px;color:#5a5a5a;left:188.00px;transform-origin:0 50%;transform:scaleX(0.7990);">アラーム設定</span>
<span id="t75" class="t" style="top:525.95px;font-size:8.6px;line-height:12.90px;color:#5a5a5a;left:243.80px;transform-origin:0 50%;transform:scaleX(0.7378);">メールボックス</span>
<span id="t76" class="t" style="top:525.95px;font-size:8.6px;line-height:12.90px;color:#5a5a5a;left:307.30px;transform-origin:0 50%;transform:scaleX(0.6840);">マーケット</span>
<span id="t77" class="t" style="top:525.95px;font-size:8.6px;line-height:12.90px;color:#5a5a5a;left:363.70px;transform-origin:0 50%;transform:scaleX(0.9126);">記事</span>
<span id="t78" class="t" style="top:525.95px;font-size:8.6px;line-height:12.90px;color:#5a5a5a;left:403.00px;transform-origin:0 50%;transform:scaleX(0.6933);">ライブラリ</span>
<span id="t79" class="t" style="top:525.95px;font-size:8.6px;line-height:12.90px;color:#5a5a5a;left:447.20px;transform-origin:0 50%;transform:scaleX(0.7367);">エキスパート</span>
<span id="t80" class="t" style="top:525.95px;font-size:8.6px;line-height:12.90px;color:#5a5a5a;left:499.60px;transform-origin:0 50%;transform:scaleX(0.9712);">操作履歴</span>
<div class="vl" style="left:94.2px;top:527.800px;height:9.600px;background:#6a6a6a"></div>
<div class="vl" style="left:142.6px;top:527.800px;height:9.600px;background:#6a6a6a"></div>
<div class="vl" style="left:181.4px;top:527.800px;height:9.600px;background:#6a6a6a"></div>
<div class="vl" style="left:236.5px;top:527.800px;height:9.600px;background:#6a6a6a"></div>
<div class="vl" style="left:299.6px;top:527.800px;height:9.600px;background:#6a6a6a"></div>
<div class="vl" style="left:356px;top:527.800px;height:9.600px;background:#6a6a6a"></div>
<div class="vl" style="left:396.4px;top:527.800px;height:9.600px;background:#6a6a6a"></div>
<div class="vl" style="left:440.5px;top:527.800px;height:9.600px;background:#6a6a6a"></div>
<div class="vl" style="left:492.3px;top:527.800px;height:9.600px;background:#6a6a6a"></div>
<div class="vl" style="left:541.4px;top:527.800px;height:9.600px;background:#6a6a6a"></div>
<span id="t81" class="t" style="top:530.80px;font-size:6.4px;line-height:9.60px;color:#e81818;font-weight:bold;left:289.40px;transform-origin:0 50%;">6</span>
<span id="t82" class="t" style="top:530.80px;font-size:6.4px;line-height:9.60px;color:#e81818;font-weight:bold;left:337.80px;transform-origin:0 50%;">105</span>
<span id="t83" class="t" style="top:530.80px;font-size:6.4px;line-height:9.60px;color:#e81818;font-weight:bold;left:381.60px;transform-origin:0 50%;">30</span>
<span class="t" style="left:2px;top:538.900px;font-size:8.600px;line-height:9.600px;font-weight:bold;color:#27364a;transform-origin:0 0;transform:rotate(-90deg) scaleX(0.690)">ターミナル</span>
<div class="hl" style="left:0;top:542.600px;width:1024px;background:#c4c4c4"></div>
<span id="t84" class="t" style="top:546.85px;font-size:8.6px;line-height:12.90px;color:#000;left:2.70px;transform-origin:0 50%;transform:scaleX(0.8133);">F1キーでヘルプが表示されます</span>
<span id="t85" class="t" style="top:546.85px;font-size:8.6px;line-height:12.90px;color:#000;left:519.70px;transform-origin:0 50%;transform:scaleX(0.9804);">Default</span>
<div class="vl" style="left:515px;top:546.400px;height:12.400px;background:#b0b0b0"></div>
<div class="vl" style="left:598.5px;top:546.400px;height:12.400px;background:#b0b0b0"></div>
<div class="vl" style="left:671px;top:546.400px;height:12.400px;background:#b0b0b0"></div>
<div class="vl" style="left:722px;top:546.400px;height:12.400px;background:#b0b0b0"></div>
<div class="vl" style="left:772.2px;top:546.400px;height:12.400px;background:#b0b0b0"></div>
<div class="vl" style="left:821.3px;top:546.400px;height:12.400px;background:#b0b0b0"></div>
<div class="vl" style="left:870.7px;top:546.400px;height:12.400px;background:#b0b0b0"></div>
<div class="vl" style="left:917.5px;top:546.400px;height:12.400px;background:#b0b0b0"></div>
<svg style="left:921.800px;top:548.200px" width="17" height="9" viewBox="0 0 17 9"><rect x="0.00" y="0" width="1.500" height="8.800" fill="#7a9a3a"/><rect x="0.00" y="4.60" width="1.500" height="4.20" fill="#2d5f9e"/><rect x="2.08" y="0" width="1.500" height="8.800" fill="#7a9a3a"/><rect x="2.08" y="3.98" width="1.500" height="4.82" fill="#2d5f9e"/><rect x="4.16" y="0" width="1.500" height="8.800" fill="#7a9a3a"/><rect x="4.16" y="3.36" width="1.500" height="5.44" fill="#2d5f9e"/><rect x="6.24" y="0" width="1.500" height="8.800" fill="#7a9a3a"/><rect x="6.24" y="2.74" width="1.500" height="6.06" fill="#2d5f9e"/><rect x="8.32" y="0" width="1.500" height="8.800" fill="#7a9a3a"/><rect x="8.32" y="2.12" width="1.500" height="6.68" fill="#2d5f9e"/><rect x="10.40" y="0" width="1.500" height="8.800" fill="#7a9a3a"/><rect x="10.40" y="1.50" width="1.500" height="7.30" fill="#2d5f9e"/><rect x="12.48" y="0" width="1.500" height="8.800" fill="#7a9a3a"/><rect x="12.48" y="0.88" width="1.500" height="7.92" fill="#2d5f9e"/><rect x="14.56" y="0" width="1.500" height="8.800" fill="#7a9a3a"/><rect x="14.56" y="0.26" width="1.500" height="8.54" fill="#2d5f9e"/></svg>
<span id="t86" class="t" style="top:546.85px;font-size:8.6px;line-height:12.90px;color:#000;left:941.90px;transform-origin:0 50%;transform:scaleX(0.9213);">599529/429 kb</span>
<svg style="left:1010px;top:548px" width="12" height="12" viewBox="0 0 12 12"><path d="M11 3.500l-7.500 7.500M11 6.500l-4.500 4.500M11 9.500l-1.500 1.500" stroke="#a8a8a8" stroke-width="0.800" fill="none"/></svg>
<div style="left:0;top:559.800px;width:1024px;height:1.200px;background:#5c6068"></div>
<div style="left:1023.100px;top:0;width:0.900px;height:561px;background:#4f5763"></div>
<div style="left:1021.600px;top:361px;width:1.500px;height:182px;background:#f0f0f0"></div>
</div>
</body></html>
